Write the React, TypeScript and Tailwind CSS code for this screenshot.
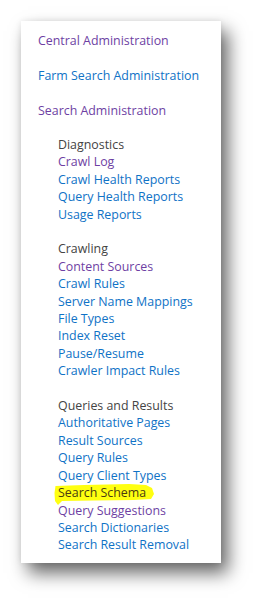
import React from "react";

const P = "text-[#6e3fa3]";
const B = "text-[#0f72c6]";

type Item = { t: string; c: string; hl?: boolean };

const sections: { h: string; items: Item[] }[] = [
  {
    h: "Diagnostics",
    items: [
      { t: "Crawl Log", c: P },
      { t: "Crawl Health Reports", c: B },
      { t: "Query Health Reports", c: B },
      { t: "Usage Reports", c: B },
    ],
  },
  {
    h: "Crawling",
    items: [
      { t: "Content Sources", c: P },
      { t: "Crawl Rules", c: B },
      { t: "Server Name Mappings", c: B },
      { t: "File Types", c: B },
      { t: "Index Reset", c: B },
      { t: "Pause/Resume", c: B },
      { t: "Crawler Impact Rules", c: B },
    ],
  },
  {
    h: "Queries and Results",
    items: [
      { t: "Authoritative Pages", c: B },
      { t: "Result Sources", c: B },
      { t: "Query Rules", c: B },
      { t: "Query Client Types", c: B },
      { t: "Search Schema", c: "text-[#4a3b10]", hl: true },
      { t: "Query Suggestions", c: P },
      { t: "Search Dictionaries", c: B },
      { t: "Search Result Removal", c: B },
    ],
  },
];

export default function App() {
  return (
    <div className="w-[263px] h-[606px] bg-white pt-[21px] pl-[21px]" style={{ fontFamily: '"Open Sans", "Noto Sans", sans-serif' }}>
      <div className="w-[200px] h-[542px] bg-white shadow-[7px_10px_17px_rgba(0,0,0,0.6),0_0_6px_rgba(0,0,0,0.08)] pt-[2px] pl-[17px] text-[12.4px]">
        <div className={`leading-[35px] ${P}`}>Central Administration</div>
        <div className={`leading-[35px] ${B}`}>Farm Search Administration</div>
        <div className={`leading-[35px] ${P}`}>Search Administration</div>
        <div className="pl-[20px] pt-[8px] flex flex-col gap-[17.4px] leading-[17.4px]">
          {sections.map((s) => (
            <div key={s.h} className="flex flex-col">
              <div className="text-[#444444]">{s.h}</div>
              {s.items.map((it) => (
                <div key={it.t} className={`relative ${it.c}`}>
                  {it.hl && (
                    <svg className="absolute left-[-4px] top-[-1px] w-[102px] h-[24px]" viewBox="0 0 102 24">
                      <path d="M1.5 3 L30 2 L75 1 L92 2 L98 5 L100 11 L97 16 L80 17 L40 17.5 L8 18 L4 22 L1 18 L0.5 10 Z" fill="#ffff10" />
                    </svg>
                  )}
                  <span className="relative">{it.t}</span>
                </div>
              ))}
            </div>
          ))}
        </div>
      </div>
    </div>
  );
}
